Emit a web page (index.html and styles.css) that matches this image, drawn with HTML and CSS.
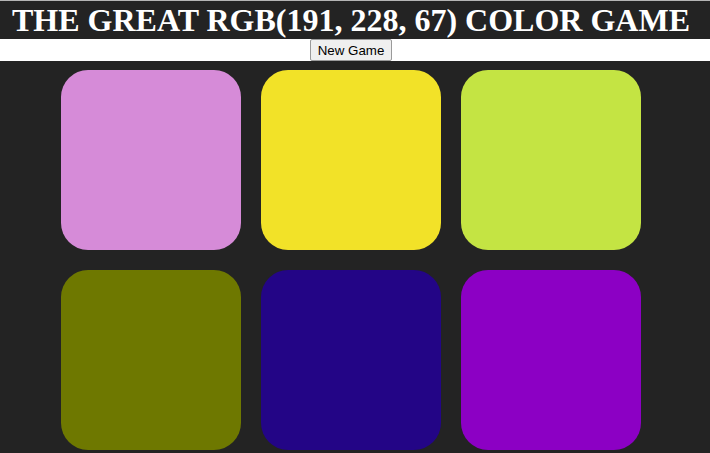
FILE: index.html
```html
<!DOCTYPE html>
<html lang="en">
<head>
  <meta charset="UTF-8">
  <title>Color Game</title>
  <link rel="stylesheet" href="styles.css">
</head>
<body>
  <h1>THE GREAT RGB(<span id="colorDisplay">191, 228, 67</span>) COLOR GAME</h1>
  <div class="stripe">
    <button id="reset">New Game</button>
  </div>
  <div id="container">
    <div class="square sq-pink"></div>
    <div class="square sq-yellow"></div>
    <div class="square sq-lime"></div>
    <div class="square sq-olive"></div>
    <div class="square sq-navy"></div>
    <div class="square sq-purple"></div>
  </div>
</body>
</html>
```

FILE: styles.css
```css
body {
  margin: 0;
  background-color: #232323;
  border-top: 1px solid #b4b4b4;
}
h1 {
  margin: 0;
  padding-right: 8px;
  height: 38px;
  line-height: 38px;
  color: #fff;
  text-align: center;
  font-family: "Liberation Serif", "Times New Roman", serif;
  font-size: 32px;
  font-weight: bold;
  white-space: nowrap;
}
.stripe {
  background: #fff;
  height: 22px;
  padding-right: 8px;
  text-align: center;
}
#reset {
  font-family: "Liberation Sans", Arial, sans-serif;
  font-size: 13.33px;
  height: 22px;
  padding: 1px 7px;
  color: #000;
  background: #efefef;
  border: 1px solid #9a9a9a;
  border-radius: 2px;
}
#container {
  width: 600px;
  margin-left: 51px;
  padding-top: 9px;
  display: grid;
  grid-template-columns: repeat(3, 180px);
  gap: 20px;
  justify-content: center;
}
.square {
  width: 180px;
  height: 180px;
  border-radius: 15%;
}
.sq-pink { background: rgb(214, 139, 216); }
.sq-yellow { background: rgb(242, 226, 40); }
.sq-lime { background: rgb(196, 228, 67); }
.sq-olive { background: rgb(110, 120, 0); }
.sq-navy { background: rgb(35, 5, 134); }
.sq-purple { background: rgb(140, 0, 196); }
```
